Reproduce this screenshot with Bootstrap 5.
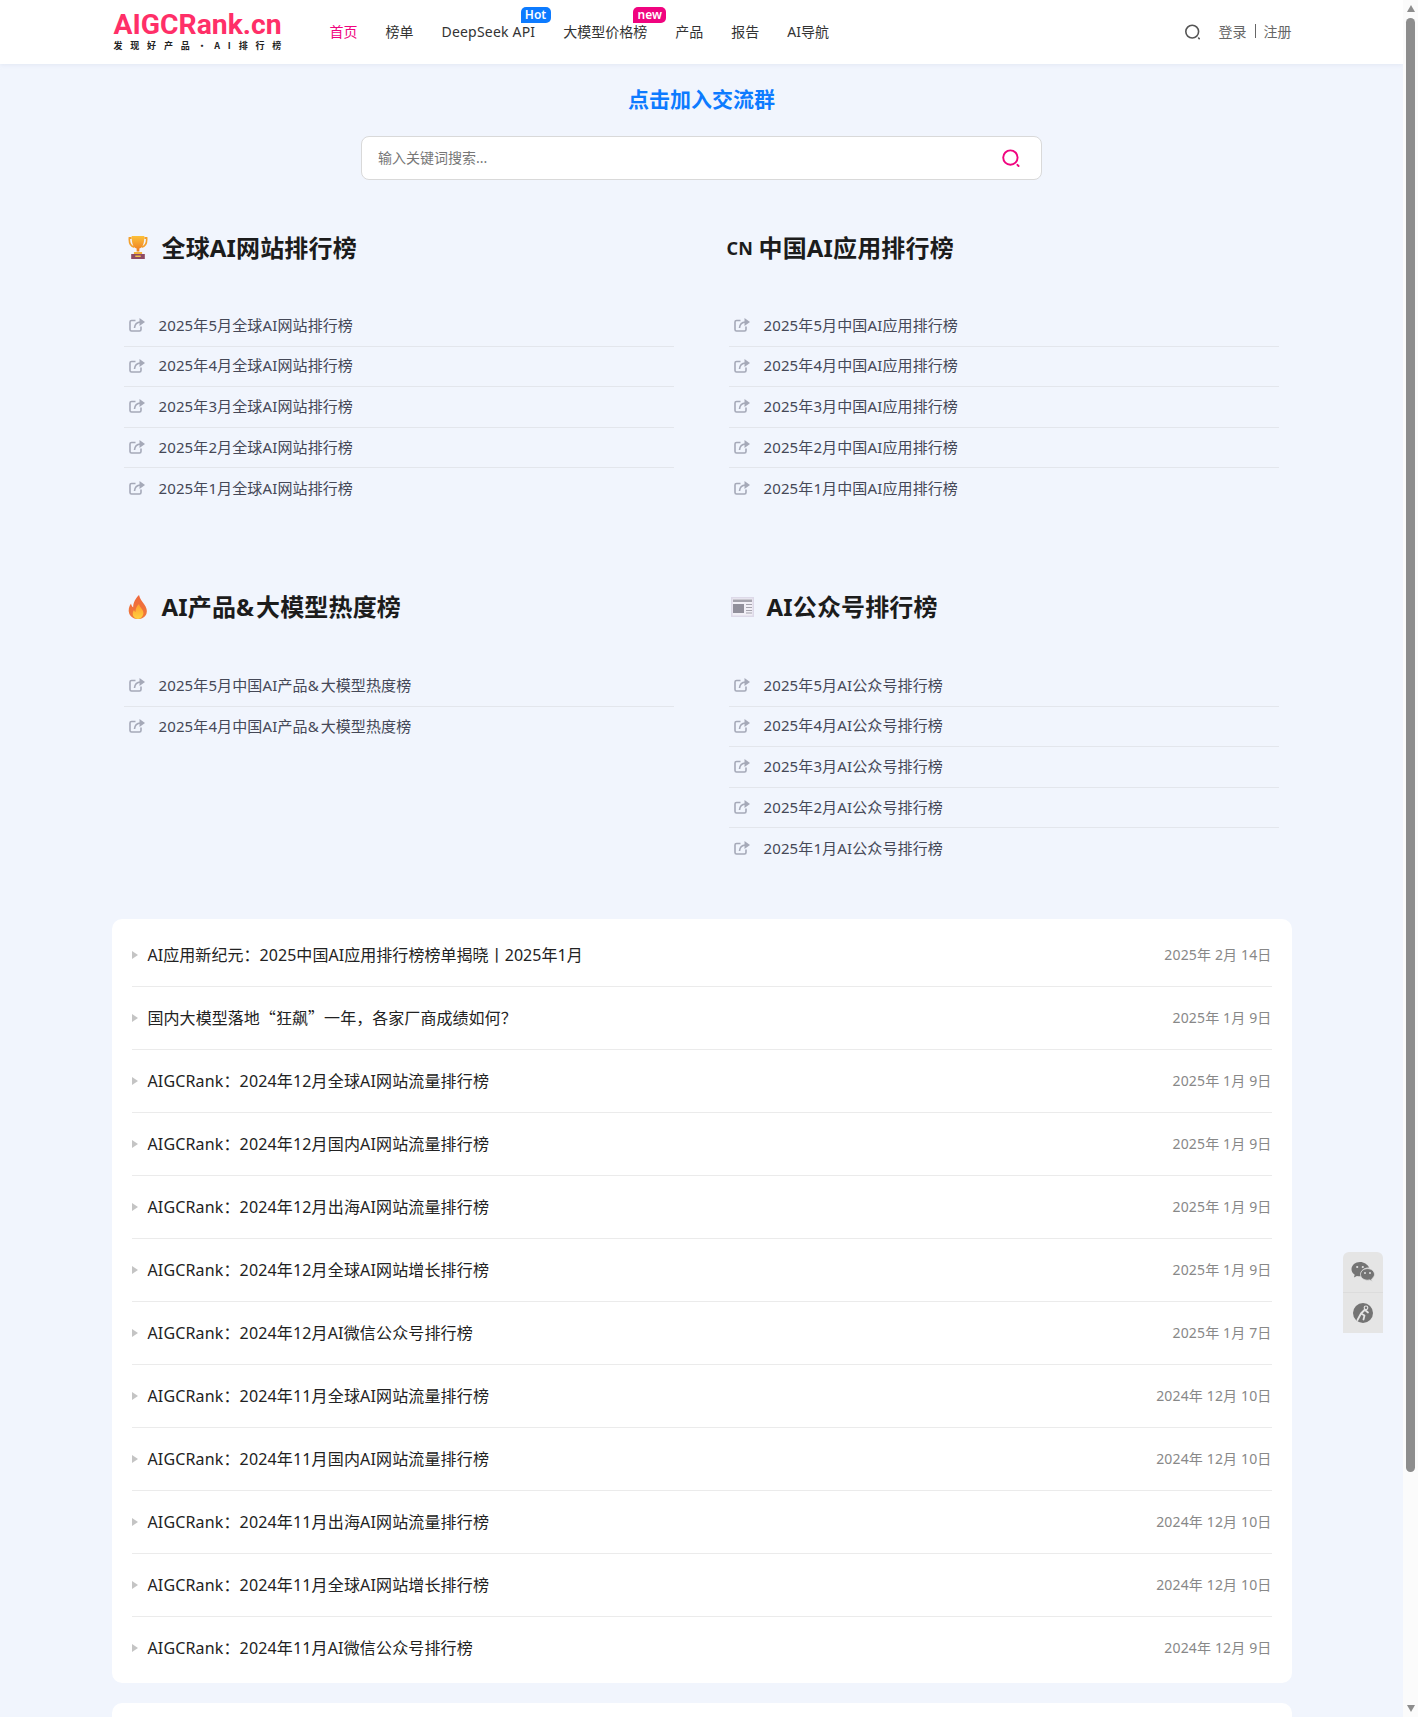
<!DOCTYPE html>
<html lang="zh-CN">
<head>
    <meta charset="UTF-8">
    <meta content="width=device-width, initial-scale=1.0" name="viewport">
    <title>AIGCRank</title>
    <link href="https://cdn.jsdelivr.net/npm/bootstrap@5.3.2/dist/css/bootstrap.min.css" rel="stylesheet">
    <style>
        html, body {
            height: 100%;
            overflow: hidden;
        }

        body {
            background-color: #f1f5fd;
            font-family: "Noto Sans", "Noto Sans CJK SC", sans-serif;
            color: #222;
        }

        .page-root {
            height: 100vh;
            overflow: hidden;
        }

        .page-main {
            flex: 1 1 auto;
            min-width: 0;
            overflow: hidden;
        }

        .page-wrap {
            width: 1180px;
            margin: 0 auto;
        }

        /* header */
        .top-bar {
            height: 64px;
            padding: 0;
            background-color: #fff;
            box-shadow: 0 1px 4px rgba(200, 210, 230, .35);
        }

        .logo-box {
            width: 204px;
            padding-left: 2px;
            text-decoration: none;
        }

        .logo-name {
            display: block;
            font-family: Roboto, sans-serif;
            font-weight: 700;
            font-size: 28.3px;
            line-height: 24px;
            margin-bottom: 2px;
            color: #ff2f68;
        }

        .logo-sub {
            display: block;
            font-family: "Noto Sans CJK SC", sans-serif;
            font-weight: 700;
            font-size: 9px;
            line-height: 10px;
            padding-top: 2px;
            letter-spacing: 7.8px;
            white-space: nowrap;
            color: #222;
        }

        .navbar-expand .navbar-nav .nav-link {
            position: relative;
            padding: 0 14px;
            font-size: 14px;
            line-height: 64px;
            color: #333;
        }

        .navbar-expand .navbar-nav .nav-link.active {
            color: #f0047f;
        }

        .nav-latin {
            letter-spacing: .2px;
        }

        .nav-flag {
            position: absolute;
            top: 7px;
            height: 16px;
            line-height: 16px;
            font-size: 12px;
            font-weight: 600;
            letter-spacing: 0;
            text-align: center;
            color: #fff;
            border-radius: 5px 5px 5px 0;
        }

        .flag-hot {
            left: 93px;
            width: 30px;
            background-color: #0d7bff;
        }

        .flag-new {
            left: 84px;
            width: 33px;
            background-color: #f0047f;
        }

        .user-links {
            margin-top: -2px;
            font-size: 14px;
            color: #666;
        }

        .user-search {
            margin-top: 2px;
            margin-right: 17px;
        }

        .user-sep {
            width: 1px;
            height: 14px;
            margin: 0 8px;
            background-color: #666;
        }

        /* search */
        .join-title {
            margin: 20px 0 22px;
            font-size: 21px;
            line-height: 30px;
            font-weight: 700;
            color: #0d7bff;
        }

        .search-box {
            width: 681px;
            height: 44px;
            margin: 0 auto 48px;
            padding: 0 20px 0 16px;
            background-color: #fff;
            border: 1px solid #d9d9d9;
            border-radius: 8px;
        }

        .search-box .form-control {
            padding: 0 0 2px;
            border: 0;
            background: none;
            box-shadow: none;
            font-size: 14px;
        }

        .search-box .form-control::placeholder {
            color: #777;
        }

        /* ranking lists */
        .rank-area {
            width: 1155px;
            margin-left: 12px;
        }

        .rank-row {
            --bs-gutter-x: 55px;
            --bs-gutter-y: 0;
        }

        .rank-block {
            margin-bottom: 78px;
        }

        .rank-block-low {
            margin-bottom: 50px;
        }

        .rank-head {
            height: 40px;
            margin-bottom: 38px;
            font-size: 24px;
            line-height: 40px;
            font-weight: 700;
            letter-spacing: .15px;
            color: #1c1c1c;
        }

        .rank-block-low .rank-head {
            margin-bottom: 39px;
        }

        .rank-head svg {
            flex: none;
        }

        .head-mark {
            width: 38px;
            padding-left: 4px;
        }

        .cup-mark {
            margin-bottom: 2px;
        }

        .head-cn {
            width: 32px;
            margin-left: -2px;
            font-size: 18px;
            font-weight: 700;
        }

        .head-news {
            width: 38px;
            padding-left: 2px;
        }

        .amp-wide {
            letter-spacing: 2px;
        }

        .rank-item {
            height: 40.6px;
            padding: 0 0 1.5px 5px;
            font-size: 15px;
            letter-spacing: .12px;
            color: #454857;
            border-color: #e3e6ec !important;
        }

        .rank-item:last-child {
            border-bottom: 0 !important;
        }

        .rank-item svg {
            flex: none;
            margin-right: 14px;
        }

        /* article card */
        .news-card {
            padding: 5px 20px 4px;
            margin-bottom: 20px;
            background-color: #fff;
            border-radius: 10px;
        }

        .news-row {
            height: 63px;
            border-bottom: 1px solid #ebebeb;
        }

        .news-row:last-child {
            border-bottom: 0;
            height: 62px;
        }

        .news-tri {
            width: 0;
            height: 0;
            margin-right: 10px;
            border-style: solid;
            border-width: 4.5px 0 4.5px 6px;
            border-color: transparent transparent transparent #c4c4c4;
        }

        .news-text {
            font-size: 16px;
            letter-spacing: .15px;
            color: #222;
        }

        .news-tight {
            letter-spacing: .05px;
        }

        .quote-mark {
            font-family: "Noto Sans CJK SC", sans-serif;
        }

        .news-date {
            font-size: 14px;
            letter-spacing: .15px;
            color: #888;
        }

        .card-stub {
            height: 60px;
            background-color: #fff;
            border-radius: 10px;
        }

        /* fake scrollbar, as the reference shows one */
        .bar-track {
            flex: 0 0 15px;
            background-color: #fbfbfb;
        }

        .bar-up {
            width: 0;
            height: 0;
            margin: 5px auto 6px;
            border-style: solid;
            border-width: 0 4.5px 7px;
            border-color: transparent transparent #8d8d8d;
        }

        .bar-thumb {
            width: 9px;
            height: 1454px;
            margin: 0 auto;
            background-color: #8d8d8d;
            border-radius: 5px;
        }

        .bar-down {
            width: 0;
            height: 0;
            margin: auto auto 5px;
            border-style: solid;
            border-width: 7px 4.5px 0;
            border-color: #8d8d8d transparent transparent;
        }

        /* floating tools */
        .side-tools {
            position: absolute;
            left: 1343px;
            top: 1252px;
            width: 40px;
            background-color: #e5e5e5;
            border-radius: 6px 6px 0 0;
        }

        .side-tool {
            height: 40px;
        }

        .side-tool + .side-tool {
            height: 41px;
            border-top: 1px solid #dcdcdc;
        }
    </style>
</head>
<body>
<div class="page-root d-flex position-relative">
    <div class="page-main">
        <nav class="navbar navbar-expand top-bar">
            <div class="page-wrap d-flex align-items-center">
                <a class="logo-box" href="#">
                    <span class="logo-name">AIGCRank.cn</span>
                    <span class="logo-sub">发现好产品·AI排行榜</span>
                </a>
                <ul class="navbar-nav">
                    <li class="nav-item"><a class="nav-link active" href="#">首页</a></li>
                    <li class="nav-item"><a class="nav-link" href="#">榜单</a></li>
                    <li class="nav-item"><a class="nav-link nav-latin" href="#">DeepSeek API<span class="nav-flag flag-hot">Hot</span></a></li>
                    <li class="nav-item"><a class="nav-link" href="#">大模型价格榜<span class="nav-flag flag-new">new</span></a></li>
                    <li class="nav-item"><a class="nav-link" href="#">产品</a></li>
                    <li class="nav-item"><a class="nav-link" href="#">报告</a></li>
                    <li class="nav-item"><a class="nav-link" href="#">AI导航</a></li>
                </ul>
                <div class="user-links d-flex align-items-center ms-auto">
                    <svg class="user-search" width="18" height="18" viewBox="0 0 18 18" fill="none" stroke="#555" stroke-width="1.6" stroke-linecap="round"><circle cx="8.2" cy="8.6" r="6.4"/><path d="M14.6 15l.6.6"/></svg>
                    <span>登录</span><span class="user-sep"></span><span>注册</span>
                </div>
            </div>
        </nav>

        <div class="page-wrap">
            <h2 class="join-title text-center">点击加入交流群</h2>
            <div class="search-box d-flex align-items-center">
                <input class="form-control" type="text" placeholder="输入关键词搜索...">
                <svg class="ms-3 flex-shrink-0" width="20" height="20" viewBox="0 0 20 20" fill="none" stroke="#f0047f" stroke-width="1.9" stroke-linecap="round"><circle cx="9.4" cy="9.6" r="7.2"/><path d="M16.4 16.8l1.2 1.2"/></svg>
            </div>

            <div class="rank-area">
                <div class="row rank-row">
                    <div class="col-6 rank-block">
                        <div class="rank-head d-flex align-items-center">
                            <span class="head-mark d-flex">
                                <svg class="cup-mark" width="20" height="24" viewBox="0 0 22 24" preserveAspectRatio="none">
                                    <defs><linearGradient id="cup" x1="0" y1="0" x2="0" y2="1"><stop offset="0" stop-color="#fcc13a"/><stop offset="1" stop-color="#ee7a20"/></linearGradient></defs>
                                    <path d="M4 3H1.5C1 9 3.500 11.500 7 12M18 3h2.500C21 9 18.500 11.500 15 12" fill="none" stroke="#f3a02c" stroke-width="1.800"/>
                                    <path d="M4 1h14c0 7-1.500 11.500-5.500 12.500v3h-3v-3C5.500 12.500 4 8 4 1z" fill="url(#cup)"/>
                                    <path d="M6.500 17h9v2h-9z" fill="#f2b13b"/>
                                    <path d="M3.500 19h15v5h-15z" fill="#8e4a63"/>
                                    <path d="M8 20.500h6v1.500H8z" fill="#f2c04a"/>
                                </svg>
                            </span>
                            全球AI网站排行榜
                        </div>
                        <div id="listGlobal"></div>
                    </div>
                    <div class="col-6 rank-block">
                        <div class="rank-head d-flex align-items-center">
                            <span class="head-cn">CN</span>
                            中国AI应用排行榜
                        </div>
                        <div id="listChina"></div>
                    </div>
                    <div class="col-6 rank-block-low">
                        <div class="rank-head d-flex align-items-center">
                            <span class="head-mark d-flex">
                                <svg width="20" height="24" viewBox="0 0 20 24">
                                    <defs><linearGradient id="fire" x1="0" y1="0" x2="0" y2="1"><stop offset="0" stop-color="#f0683c"/><stop offset="1" stop-color="#ef7a3a"/></linearGradient><linearGradient id="fireIn" x1="0" y1="0" x2="0" y2="1"><stop offset="0" stop-color="#ff9b2e"/><stop offset="1" stop-color="#ffd23f"/></linearGradient></defs>
                                    <path d="M11 0c1 4 3 6 5 9 2.500 3.500 3.500 6.500 2.500 9.500C17.500 22 14 24 10 24S2.500 22 1.200 18.500C0 15 1 11.500 3 8.500c.4 2 1 3 2.200 3.800C5 8 7.500 3.500 11 0z" fill="url(#fire)"/>
                                    <path d="M11 9c.5 2.500 2 3.800 3.500 6 1.500 2.500 1 5-.5 6.800-1 1.400-2.500 2.200-4 2.200s-3.500-.8-4.500-2.500c-1.200-2-1-4.500.5-6.500.3 1 .8 1.700 1.500 2C7.500 14 8.500 11 11 9z" fill="url(#fireIn)"/>
                                </svg>
                            </span>
                            <span>AI产品<span class="amp-wide">&amp;</span>大模型热度榜</span>
                        </div>
                        <div id="listProduct"></div>
                    </div>
                    <div class="col-6 rank-block-low">
                        <div class="rank-head d-flex align-items-center">
                            <span class="head-news d-flex">
                                <svg width="23" height="21" viewBox="0 0 23 21">
                                    <path d="M0 1h23v20H0z" fill="#ddd9e8"/>
                                    <path d="M1.500 2.500h20v17h-20z" fill="#f1eff6"/>
                                    <path d="M2 3.500h19v2.500H2z" fill="#a5a3ad"/>
                                    <path d="M2 8h11v9H2z" fill="#918f9b"/>
                                    <path d="M15 8h6v1h-6zM15 11h6v1h-6zM15 14h6v1h-6zM15 16.500h6v1h-6z" fill="#a5a3ad"/>
                                </svg>
                            </span>
                            AI公众号排行榜
                        </div>
                        <div id="listWechat"></div>
                    </div>
                </div>
            </div>

            <div class="news-card" id="newsCard"></div>
            <div class="card-stub"></div>
        </div>
    </div>

    <div class="bar-track d-flex flex-column">
        <div class="bar-up"></div>
        <div class="bar-thumb"></div>
        <div class="bar-down"></div>
    </div>

    <div class="side-tools">
        <div class="side-tool d-flex align-items-center justify-content-center">
            <svg width="24" height="22" viewBox="0 0 24 22" fill="#747474">
                <path d="M9 1C4.300 1 .5 4.200.5 8.200c0 2.300 1.300 4.300 3.200 5.600l-.8 2.600 3-1.500c1 .3 2 .4 3.100.4.300 0 .7 0 1-.1-.2-.7-.3-1.300-.3-2 0-3.700 3.500-6.600 7.800-6.600h.8C16.400 3.400 13 1 9 1z"/>
                <path d="M16.500 7.600c-3.900 0-7 2.600-7 5.800s3.100 5.800 7 5.800c.8 0 1.600-.1 2.300-.3l2.400 1.300-.6-2.200c1.700-1.100 2.900-2.800 2.900-4.600 0-3.200-3.100-5.800-7-5.800z" stroke="#e5e5e5" stroke-width=".8"/>
                <circle cx="6.200" cy="6" r="1.100" fill="#e5e5e5"/><circle cx="11.800" cy="6" r="1.100" fill="#e5e5e5"/>
                <circle cx="14" cy="12" r=".95" fill="#e5e5e5"/><circle cx="19" cy="12" r=".95" fill="#e5e5e5"/>
            </svg>
        </div>
        <div class="side-tool d-flex align-items-center justify-content-center">
            <svg width="20" height="20" viewBox="0 0 20 20">
                <circle cx="10" cy="10" r="10" fill="#747474"/>
                <circle cx="13" cy="4.800" r="1.800" fill="none" stroke="#e5e5e5" stroke-width="1.200"/>
                <path d="M11.500 7L8 10.500 4.500 17M8 10.500l3.500 2-1 4M12 7l3 2.500" fill="none" stroke="#e5e5e5" stroke-width="1.800" stroke-linecap="round" stroke-linejoin="round"/>
            </svg>
        </div>
    </div>
</div>

<script src="https://cdn.jsdelivr.net/npm/bootstrap@5.3.2/dist/js/bootstrap.bundle.min.js"></script>
<script>
    const linkIcon = `<svg width="16" height="14" viewBox="0 0 16 14" fill="none" stroke="#a5a9b8" stroke-width="1.600"><path d="M6.500 2.500h-4A1.500 1.500 0 0 0 1 4v7.500A1.500 1.500 0 0 0 2.500 13h8a1.500 1.500 0 0 0 1.500-1.500V8.500"/><path d="M5.500 10C5.800 6.500 8 4.200 11.500 4"/><path d="M10.500 0L16 4l-5.500 4z" fill="#a5a9b8" stroke="none"/></svg>`;
    const months = [5, 4, 3, 2, 1];

    function fillRanks(id, items) {
        document.getElementById(id).innerHTML = items.map(text => `
            <div class="rank-item d-flex align-items-center border-bottom">${linkIcon}<span>${text}</span></div>
        `).join('');
    }

    fillRanks('listGlobal', months.map(m => `2025年${m}月全球AI网站排行榜`));
    fillRanks('listChina', months.map(m => `2025年${m}月中国AI应用排行榜`));
    fillRanks('listProduct', [5, 4].map(m => `2025年${m}月中国AI产品<span class="amp-wide">&amp;</span>大模型热度榜`));
    fillRanks('listWechat', months.map(m => `2025年${m}月AI公众号排行榜`));

    const news = [
        ['<span class="news-tight">AI应用新纪元：2025中国AI应用排行榜榜单揭晓丨2025年1月</span>', '2025年 2月 14日'],
        ['<span class="news-tight">国内大模型落地<span class="quote-mark">“</span>狂飙<span class="quote-mark">”</span>一年，各家厂商成绩如何？</span>', '2025年 1月 9日'],
        ['AIGCRank：2024年12月全球AI网站流量排行榜', '2025年 1月 9日'],
        ['AIGCRank：2024年12月国内AI网站流量排行榜', '2025年 1月 9日'],
        ['AIGCRank：2024年12月出海AI网站流量排行榜', '2025年 1月 9日'],
        ['AIGCRank：2024年12月全球AI网站增长排行榜', '2025年 1月 9日'],
        ['AIGCRank：2024年12月AI微信公众号排行榜', '2025年 1月 7日'],
        ['AIGCRank：2024年11月全球AI网站流量排行榜', '2024年 12月 10日'],
        ['AIGCRank：2024年11月国内AI网站流量排行榜', '2024年 12月 10日'],
        ['AIGCRank：2024年11月出海AI网站流量排行榜', '2024年 12月 10日'],
        ['AIGCRank：2024年11月全球AI网站增长排行榜', '2024年 12月 10日'],
        ['AIGCRank：2024年11月AI微信公众号排行榜', '2024年 12月 9日']
    ];

    document.getElementById('newsCard').innerHTML = news.map(([title, date]) => `
        <div class="news-row d-flex align-items-center">
            <span class="news-tri"></span>
            <span class="news-text">${title}</span>
            <span class="news-date ms-auto">${date}</span>
        </div>
    `).join('');
</script>
</body>
</html>
